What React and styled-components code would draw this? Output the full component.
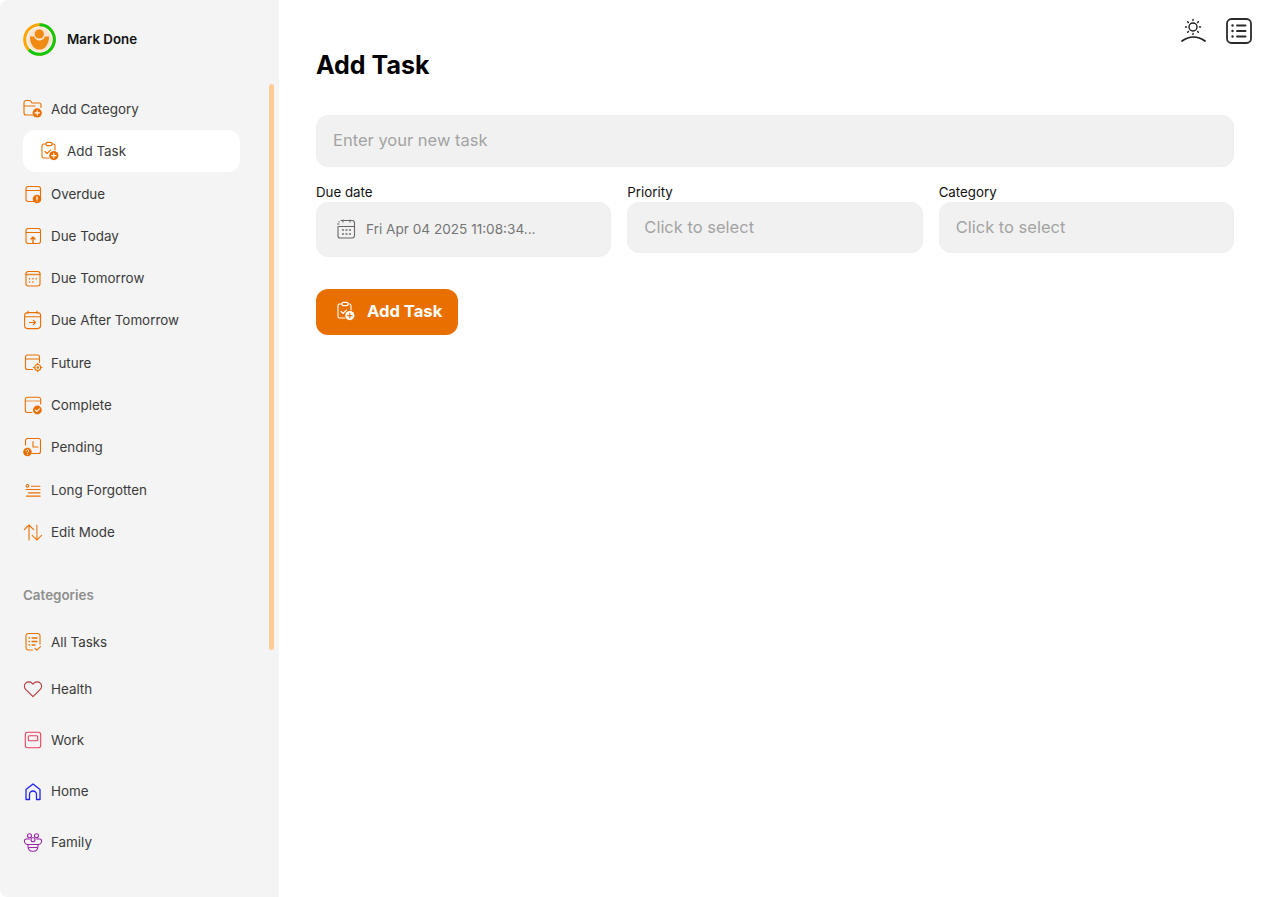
import React from "react";
import styled, { createGlobalStyle } from "styled-components";

const ORANGE = "#e97000";

const GlobalStyle = createGlobalStyle`
  html, body {
    margin: 0;
    padding: 0;
    height: 100%;
    background: #ffffff;
    font-family: Inter, "Noto Sans", sans-serif;
  }
  * { box-sizing: border-box; }
`;

const Svg = ({ children, stroke = ORANGE, size = 20, view = 20 }) => (
  <svg
    width={size}
    height={size}
    viewBox={`0 0 ${view} ${view}`}
    fill="none"
    stroke={stroke}
    strokeWidth="1.1"
    strokeLinecap="round"
    strokeLinejoin="round"
  >
    {children}
  </svg>
);

const PlusBadge = ({ cx = 14.8, cy = 14.8, fill = ORANGE, mark = "#fff" }) => (
  <>
    <circle cx={cx} cy={cy} r="4.6" fill={fill} stroke="none" />
    <path d={`M${cx - 2.2} ${cy}h4.4M${cx} ${cy - 2.2}v4.4`} stroke={mark} strokeWidth="1.1" />
  </>
);

const FolderAddIcon = () => (
  <Svg>
    <path d="M10 16H3a2 2 0 0 1-2-2V3.5A2 2 0 0 1 3 1.5h3.2a2 2 0 0 1 1.6.8l1.2 1.7h7a2 2 0 0 1 2 2v2.5" />
    <path d="M1 7h11" />
    <PlusBadge cx={14.2} cy={13.9} />
  </Svg>
);

const ClipboardAddIcon = ({ stroke = ORANGE, fill = ORANGE, mark = "#fff" }) => (
  <Svg stroke={stroke}>
    <path d="M7 3H4.5A1.5 1.5 0 0 0 3 4.5v11A1.5 1.5 0 0 0 4.5 17H10" />
    <path d="M13 3h1.5A1.5 1.5 0 0 1 16 4.5V9" />
    <rect x="7" y="1.4" width="6" height="3.2" rx="1.2" />
    <path d="M6 10.5l2 2 3.6-3.6" />
    <PlusBadge cx={14.8} cy={14.6} fill={fill} mark={mark} />
  </Svg>
);

const CalendarShell = () => (
  <>
    <rect x="3" y="2.5" width="14.5" height="15" rx="2.2" />
    <path d="M3 6.5h14.5" />
  </>
);

const OverdueIcon = () => (
  <Svg>
    <CalendarShell />
    <circle cx="14" cy="15" r="4.3" fill={ORANGE} stroke="none" />
    <path d="M14 12.8v2.6M14 17v.1" stroke="#fff" strokeWidth="1.2" />
  </Svg>
);

const DueTodayIcon = () => (
  <Svg>
    <CalendarShell />
    <path d="M10 17.5V11M8 13l2-2 2 2" strokeWidth="1.4" />
  </Svg>
);

const DueTomorrowIcon = () => (
  <Svg>
    <rect x="3" y="3.5" width="14" height="14.5" rx="2.2" />
    <path d="M3 6.5h14" strokeWidth="1.6" opacity="0.8" />
    <path
      d="M6 10.8h1.2M9.3 10.8h1.2M12.6 10.8h1.2M6 14h1.2M9.3 14h1.2"
      strokeWidth="1.5"
      strokeLinecap="butt"
    />
  </Svg>
);

const DueAfterIcon = () => (
  <Svg>
    <rect x="1.6" y="2.6" width="16" height="16" rx="3" />
    <path d="M1.6 6.8h16M5 1v2.2M14 1v2.2" />
    <path d="M6.5 12.5h6M10.3 10.3l2.2 2.2-2.2 2.2" />
  </Svg>
);

const FutureIcon = () => (
  <Svg>
    <path d="M9.5 16.5H4.5a2 2 0 0 1-2-2V4a2 2 0 0 1 2-2h10a2 2 0 0 1 2 2v5.5" />
    <path d="M2.5 6h14" />
    <circle cx="14.7" cy="14.5" r="3" />
    <circle cx="14.7" cy="14.5" r="0.7" fill={ORANGE} />
    <path d="M14.7 10.2v1.2M14.7 17.6v1.2M10.4 14.5h1.2M17.8 14.5h1.2" />
  </Svg>
);

const CompleteIcon = () => (
  <Svg>
    <path d="M9 17.5H4.5a2.2 2.2 0 0 1-2.2-2.2V4.5A2.2 2.2 0 0 1 4.5 2.3h11a2.2 2.2 0 0 1 2.2 2.2V9" />
    <path d="M2.3 6h15.4" opacity="0.7" />
    <circle cx="14.4" cy="15" r="4.4" fill={ORANGE} stroke="none" />
    <path d="M12.4 15l1.5 1.5 2.5-2.7" stroke="#fff" />
  </Svg>
);

const PendingIcon = () => (
  <Svg>
    <path d="M2.5 8V3.5a2 2 0 0 1 2-2h11a2 2 0 0 1 2 2v11a2 2 0 0 1-2 2H9" />
    <path d="M10 4.5V10h5" />
    <circle cx="4.5" cy="15" r="4.3" fill={ORANGE} stroke="none" />
    <path d="M3.3 13.8a1.2 1.2 0 1 1 1.8 1.1c-.4.2-.6.4-.6.8M4.5 17.2v.1" stroke="#fff" strokeWidth="0.9" />
  </Svg>
);

const ForgottenIcon = () => (
  <Svg>
    <circle cx="4.5" cy="5.8" r="1.3" />
    <path d="M8.5 6.3H17M3 9.5h14" />
    <path d="M5.5 12.8H17" strokeWidth="1.3" />
    <path d="M3.5 16.2H17" strokeWidth="1.3" />
  </Svg>
);

const EditModeIcon = () => (
  <Svg>
    <path d="M6 18V3M1.3 7.7L6 3l4.7 4.7" />
    <path d="M13.9 3v15M9.2 13.3L13.9 18l4.7-4.7" opacity="0.9" />
  </Svg>
);

const AllTasksIcon = () => (
  <Svg>
    <path d="M9.5 18H5.2A2.2 2.2 0 0 1 3 15.8V3.7a2.2 2.2 0 0 1 2.2-2.2h9.6A2.2 2.2 0 0 1 17 3.7V12" />
    <path d="M6 6h.5M9 6h5M6 9.5h.5M9 9.5h5M6 13h.5M9 13h3" strokeWidth="1.3" />
    <path d="M12 16.3l1.8 1.8 3.7-3.5" />
  </Svg>
);

const HeartIcon = () => (
  <Svg stroke="#b53a3a">
    <path d="M10 17.7L2.700 10.400a4.300 4.300 0 0 1 0-6.200 4.400 4.400 0 0 1 6.300 0l1 1 1-1a4.400 4.400 0 0 1 6.300 0 4.300 4.300 0 0 1 0 6.200z" />
  </Svg>
);

const WorkIcon = () => (
  <Svg stroke="#e2415f">
    <rect x="2.3" y="2.3" width="15.4" height="15.4" rx="2.2" />
    <rect x="5.3" y="5.7" width="9.4" height="5" rx="1" />
  </Svg>
);

const HomeIcon = () => (
  <Svg stroke="#2323f0">
    <path d="M3 18.5V8.600L10 3l7 5.600v9.900h-3.500v-5a3.500 3.500 0 0 0-7 0v5z" strokeWidth="1.3" />
  </Svg>
);

const FamilyIcon = () => (
  <Svg stroke="#9c27a8">
    <circle cx="6.5" cy="3.8" r="2" />
    <circle cx="13.5" cy="3.8" r="2" />
    <circle cx="10" cy="7.8" r="2" />
    <path d="M6.300 7H3.200a1.800 1.800 0 0 0-1.800 2c0 2 1.800 3.500 3.500 3.500h10.200c1.700 0 3.500-1.500 3.500-3.500a1.800 1.800 0 0 0-1.800-2h-3.100" />
    <path d="M5 12.500v2c0 2.600 2 4.700 4 4.700h2c2 0 4-2.100 4-4.700v-2" />
    <path d="M6 15.500h8" />
  </Svg>
);

const SunIcon = () => (
  <svg width="28" height="28" viewBox="0 0 28 28" fill="none" stroke="#1c1c1c" strokeWidth="1.4" strokeLinecap="round">
    <circle cx="14" cy="10" r="4" />
    <path d="M14 2.500v1M14 16.500v1M6.500 10h1M20.500 10h1M8.700 4.700l.7.700M18.600 14.600l.7.700M8.700 15.300l.7-.7M18.600 5.400l.7-.7" />
    <path d="M3 24Q14.500 16 26 24" strokeWidth="1.7" />
  </svg>
);

const ListIcon = () => (
  <svg width="26" height="26" viewBox="0 0 26 26" fill="none" stroke="#2b2b2b" strokeWidth="1.8" strokeLinecap="round">
    <rect x="1" y="1" width="24" height="24" rx="4.5" />
    <path d="M6.500 7.500h.1M6.500 13h.1M6.500 18.500h.1" strokeWidth="2.4" />
    <path d="M11 7.500h8.500M11 13h8.500M11 18.500h8.500" strokeWidth="2" />
  </svg>
);

const DateIcon = () => (
  <svg width="22" height="22" viewBox="0 0 22 22" fill="none" stroke="#666" strokeWidth="1.1" strokeLinecap="round">
    <path d="M4 3.500V4M4 8.500h15.500M2.500 6h1.500M6 2.500h11a2.500 2.500 0 0 1 2.500 2.500v12.500A2.500 2.500 0 0 1 17 20H5a2 2 0 0 1-2-2V8.500" />
    <path d="M8 2v2M15 2v2" />
    <path d="M7.500 12h1M11 12h1M14.500 12h1M7.500 16h1M11 16h1M14.500 16h1" strokeWidth="1.3" />
  </svg>
);

const AvatarIcon = () => (
  <svg width="33" height="33" viewBox="0 0 33 33" fill="none">
    <circle cx="16.5" cy="16.5" r="14.8" stroke="#ffa500" strokeWidth="3" />
    <path d="M16.500 1.700a14.800 14.800 0 1 1-10.500 25.200" stroke="#0fc80f" strokeWidth="3" />
    <circle cx="16.5" cy="16.5" r="12" fill="#fbe3cd" />
    <circle cx="16.3" cy="11" r="4.6" fill="#ef8a12" />
    <path d="M7 13.500h4.200c.6 2.600 2.800 4 5.300 4s4.700-1.400 5.300-4H26v1.500a9.500 11.500 0 0 1-19 0z" fill="#ef8a12" />
  </svg>
);

const Page = styled.div`
  display: flex;
  height: 897px;
  overflow: hidden;
  background: #ffffff;
`;

const Sidebar = styled.aside`
  position: relative;
  flex: 0 0 279px;
  height: 100%;
  background: #f4f4f4;
  border-radius: 8px 0 0 8px;
  padding-left: 23px;
`;

const ScrollThumb = styled.div`
  position: absolute;
  top: 84px;
  left: 269px;
  width: 5px;
  height: 566px;
  border-radius: 3px;
  background: #ffcc96;
`;

const Profile = styled.div`
  display: flex;
  align-items: center;
  gap: 11px;
  height: 78px;
  margin-bottom: 9.8px;
  font-size: 13.3px;
  font-weight: 600;
  color: #111111;
`;

const NavList = styled.nav`
  display: flex;
  flex-direction: column;
  width: 217px;
`;

const NavRow = styled.div`
  display: flex;
  align-items: center;
  gap: 8px;
  height: ${(p) => p.$height || 42.3}px;
  padding-left: ${(p) => (p.$active ? 16 : 0)}px;
  border-radius: 12px;
  background: ${(p) => (p.$active ? "#ffffff" : "transparent")};
  font-size: 13.4px;
  color: #3a3a3a;
`;

const SectionTitle = styled.h3`
  margin: 32px 0 16px;
  height: 20px;
  line-height: 20px;
  font-size: 13.4px;
  font-weight: 600;
  color: #8e8e8e;
`;

const Main = styled.main`
  position: relative;
  flex: 1;
  padding: 49px 35px 0 37px;
`;

const TopIcons = styled.div`
  position: absolute;
  top: 17px;
  right: 17px;
  display: flex;
  align-items: center;
  gap: 19px;
`;

const Title = styled.h1`
  margin: 0 0 33px;
  height: 33px;
  line-height: 33px;
  font-size: 25px;
  font-weight: 700;
  color: #000000;
`;

const FieldBox = styled.div`
  display: flex;
  align-items: center;
  gap: 9px;
  height: ${(p) => p.$height}px;
  padding: 0 0 2px ${(p) => p.$pad || 16}px;
  border: 1px solid #eeeeee;
  border-radius: 12px;
  background: #f1f1f1;
  font-size: 16.5px;
  color: #a3a3a3;
`;

const FieldGrid = styled.div`
  display: grid;
  grid-template-columns: repeat(3, 1fr);
  gap: 16px;
  margin-top: 17px;
  align-items: start;
`;

const Label = styled.label`
  display: block;
  height: 16px;
  margin-bottom: 2px;
  line-height: 16px;
  font-size: 13.3px;
  color: #111111;
`;

const DateText = styled.span`
  font-size: 13.6px;
  color: #757575;
`;

const SubmitButton = styled.button`
  display: flex;
  align-items: center;
  gap: 12px;
  width: 142px;
  height: 46px;
  margin-top: 32px;
  padding: 0 0 2px 19px;
  border: 0;
  border-radius: 12px;
  background: ${ORANGE};
  color: #ffffff;
  font-family: inherit;
  font-size: 16.6px;
  font-weight: 700;
`;

const menu = [
  ["Add Category", FolderAddIcon],
  ["Add Task", ClipboardAddIcon, true],
  ["Overdue", OverdueIcon],
  ["Due Today", DueTodayIcon],
  ["Due Tomorrow", DueTomorrowIcon],
  ["Due After Tomorrow", DueAfterIcon],
  ["Future", FutureIcon],
  ["Complete", CompleteIcon],
  ["Pending", PendingIcon],
  ["Long Forgotten", ForgottenIcon],
  ["Edit Mode", EditModeIcon],
];

const categories = [
  ["Health", HeartIcon],
  ["Work", WorkIcon],
  ["Home", HomeIcon],
  ["Family", FamilyIcon],
];

export default function App() {
  return (
    <Page>
      <GlobalStyle />
      <Sidebar>
        <Profile>
          <AvatarIcon />
          Mark Done
        </Profile>
        <NavList>
          {menu.map(([name, Icon, active]) => (
            <NavRow key={name} $active={active}>
              <Icon />
              {name}
            </NavRow>
          ))}
        </NavList>
        <SectionTitle>Categories</SectionTitle>
        <NavList>
          <NavRow>
            <AllTasksIcon />
            All Tasks
          </NavRow>
          {categories.map(([name, Icon]) => (
            <NavRow key={name} $height={51}>
              <Icon />
              {name}
            </NavRow>
          ))}
        </NavList>
        <ScrollThumb />
      </Sidebar>
      <Main>
        <TopIcons>
          <SunIcon />
          <ListIcon />
        </TopIcons>
        <Title>Add Task</Title>
        <FieldBox $height={52}>Enter your new task</FieldBox>
        <FieldGrid>
          <div>
            <Label>Due date</Label>
            <FieldBox $height={55} $pad={18}>
              <DateIcon />
              <DateText>Fri Apr 04 2025 11:08:34...</DateText>
            </FieldBox>
          </div>
          <div>
            <Label>Priority</Label>
            <FieldBox $height={51}>Click to select</FieldBox>
          </div>
          <div>
            <Label>Category</Label>
            <FieldBox $height={51}>Click to select</FieldBox>
          </div>
        </FieldGrid>
        <SubmitButton>
          <ClipboardAddIcon stroke="#ffffff" fill="#ffffff" mark={ORANGE} />
          Add Task
        </SubmitButton>
      </Main>
    </Page>
  );
}
